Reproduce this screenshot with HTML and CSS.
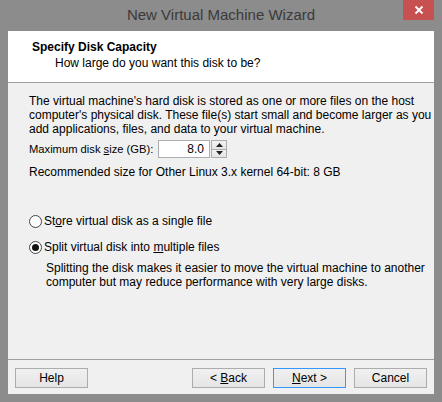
FILE: index.html
```html
<!DOCTYPE html>
<html>
<head>
<meta charset="utf-8">
<link rel="stylesheet" href="styles.css">
</head>
<body>
<div class="window">
  <div class="titlebar">
    <span></span>
    <span class="title">New Virtual Machine Wizard</span>
    <span class="close"><svg width="10" height="10" viewBox="0 0 10 10"><path d="M1.5 1.5 L8.5 8.5 M8.5 1.5 L1.5 8.5" stroke="#fff" stroke-width="1.8"/></svg></span>
  </div>
  <div class="client">
    <div class="header">
      <div class="h-title">Specify Disk Capacity</div>
      <div class="h-sub">How large do you want this disk to be?</div>
    </div>
    <div class="body">
      <p class="intro">The virtual machine's hard disk is stored as one or more files on the host<br>computer's physical disk. These file(s) start small and become larger as you<br>add applications, files, and data to your virtual machine.</p>
      <div class="size-row">
        <span class="label">Maximum disk <u>s</u>ize (GB):</span>
        <div class="spin">
          <div class="spin-input">8.0</div>
          <div class="spin-btns">
            <div class="spin-btn"><svg width="7" height="4" viewBox="0 0 7 4"><path d="M0 4 L3.5 0 L7 4Z" fill="#222"/></svg></div>
            <div class="spin-btn"><svg width="7" height="4" viewBox="0 0 7 4"><path d="M0 0 L3.5 4 L7 0Z" fill="#222"/></svg></div>
          </div>
        </div>
      </div>
      <p class="rec">Recommended size for Other Linux 3.x kernel 64-bit: 8 GB</p>
      <div class="radios">
        <label class="radio"><span class="dot"></span><span>St<u>o</u>re virtual disk as a single file</span></label>
        <label class="radio last"><span class="dot on"></span><span>Split virtual disk into <u>m</u>ultiple files</span></label>
        <p class="desc">Splitting the disk makes it easier to move the virtual machine to another<br>computer but may reduce performance with very large disks.</p>
      </div>
    </div>
    <div class="footer">
      <button class="btn">Help</button>
      <span class="spacer"></span>
      <button class="btn">&lt; <u>B</u>ack</button>
      <button class="btn default"><u>N</u>ext &gt;</button>
      <button class="btn">Cancel</button>
    </div>
  </div>
</div>
</body>
</html>
```

FILE: styles.css
```css
* { box-sizing: border-box; }
html, body { margin: 0; padding: 0; }
body {
  background: #8c8c8c;
  font-family: "Liberation Sans", Arial, sans-serif;
  font-size: 12px;
  color: #000;
}
.window {
  width: 442px;
  height: 402px;
  background: #8c8c8c;
  display: flex;
  flex-direction: column;
}
.titlebar {
  height: 31px;
  display: grid;
  grid-template-columns: 1fr auto 1fr;
  align-items: start;
}
.title {
  font-size: 15px;
  color: #3a3a3a;
  line-height: 30px;
}
.close {
  justify-self: end;
  margin-right: 8px;
  width: 31px;
  height: 20px;
  background: #c75050;
  display: flex;
  align-items: center;
  justify-content: center;
}
.client {
  margin: 0 8px 8px;
  flex: 1;
  background: #f0f0f0;
  display: flex;
  flex-direction: column;
}
.header {
  height: 52px;
  background: #fff;
  border-bottom: 1px solid #a0a0a0;
  padding: 8px 0 0 24px;
}
.h-title {
  font-weight: bold;
  line-height: 16px;
}
.h-sub {
  padding-left: 23px;
  line-height: 16px;
}
.body {
  flex: 1;
  padding: 11px 10px 0 21px;
}
p { margin: 0; }
.intro {
  line-height: 14px;
  white-space: nowrap;
}
.size-row {
  display: flex;
  align-items: center;
  margin-top: 4px;
  height: 18px;
}
.label {
  flex: none;
  width: 129px;
  white-space: nowrap;
  font-size: 11.2px;
}
.spin {
  display: flex;
  height: 18px;
}
.spin-input {
  width: 52px;
  height: 18px;
  background: #fff;
  border: 1px solid #abadb3;
  text-align: right;
  padding-right: 5px;
  line-height: 16px;
}
.spin-btns {
  display: flex;
  flex-direction: column;
  width: 16px;
  margin-left: 1px;
}
.spin-btn {
  flex: 1;
  border: 1px solid #acacac;
  background: linear-gradient(#f2f2f2, #e5e5e5);
  display: flex;
  align-items: center;
  justify-content: center;
}
.spin-btn + .spin-btn { border-top: none; }
.rec {
  margin-top: 7px;
  line-height: 14px;
}
.radios {
  margin-top: 35px;
  display: flex;
  flex-direction: column;
}
.radio {
  display: flex;
  align-items: center;
  height: 14px;
  line-height: 14px;
  margin-bottom: 12px;
}
.radio.last { margin-bottom: 7px; }
.dot {
  width: 13px;
  height: 13px;
  border-radius: 50%;
  border: 1px solid #444;
  background: #fff;
  margin-right: 2px;
  display: flex;
  align-items: center;
  justify-content: center;
}
.dot.on::after {
  content: "";
  width: 7px;
  height: 7px;
  border-radius: 50%;
  background: #111;
}
.desc {
  padding-left: 17px;
  line-height: 14px;
  white-space: nowrap;
}
.footer {
  height: 35px;
  border-top: 1px solid #a0a0a0;
  display: flex;
  align-items: flex-start;
  padding: 8px 7px 0 7px;
  gap: 8px;
}
.spacer { flex: 1; }
.btn {
  width: 73px;
  height: 20px;
  font: inherit;
  color: #000;
  border: 1px solid #acacac;
  background: linear-gradient(#f0f0f0, #e5e5e5);
  padding: 0;
  line-height: 18px;
}
.btn.default { border-color: #3399ff; }
```
